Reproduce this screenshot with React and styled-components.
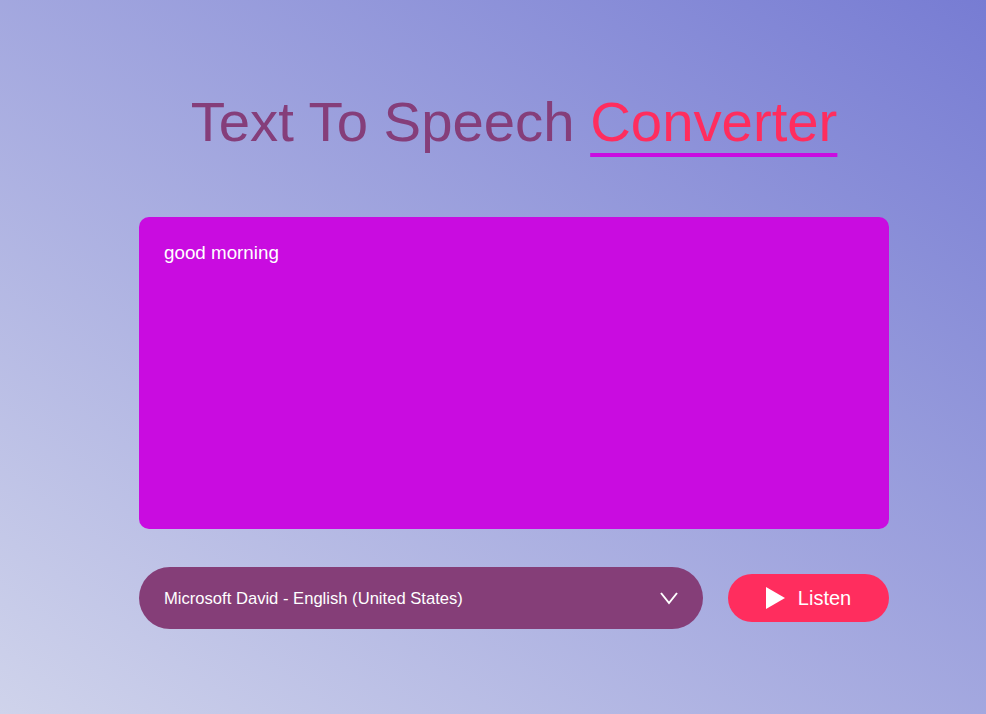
import React, { useState } from 'react';
import styled, { createGlobalStyle } from 'styled-components';

const GlobalStyle = createGlobalStyle`
  * { box-sizing: border-box; }
  html, body { margin: 0; padding: 0; }
  body {
    font-family: "Liberation Sans", Arial, sans-serif;
    min-height: 100vh;
    background: linear-gradient(to right top, #cfd3eb, #777cd3);
  }
`;

const Page = styled.div`
  min-height: 100vh;
  padding: 84px 0 0 42px;
`;

const Container = styled.div`
  width: 750px;
  margin: 0 auto;
  display: flex;
  flex-direction: column;
  align-items: center;
`;

const Title = styled.h1`
  margin: 0;
  font-size: 56.3px;
  font-weight: 400;
  line-height: 76px;
  color: #853e7a;
`;

const Accent = styled.span`
  color: #ff2d5e;
  text-decoration: underline;
  text-decoration-color: #c90de0;
  text-decoration-thickness: 4px;
  text-underline-offset: 12px;
`;

const TextBox = styled.textarea`
  margin-top: 57px;
  width: 100%;
  height: 312px;
  border: none;
  outline: none;
  resize: none;
  border-radius: 10px;
  background: #c90ce0;
  color: #fff;
  padding: 25px 25px;
  font-family: "Liberation Sans", Arial, sans-serif;
  font-size: 18.8px;
  line-height: 22px;
`;

const Row = styled.div`
  margin-top: 38px;
  width: 100%;
  display: flex;
  align-items: center;
  gap: 25px;
`;

const SelectWrap = styled.div`
  position: relative;
  flex: 1;
  height: 62px;
`;

const Select = styled.select`
  appearance: none;
  width: 100%;
  height: 100%;
  border: none;
  outline: none;
  border-radius: 31px;
  background: #853e78;
  color: #fff;
  padding: 0 60px 0 25px;
  font-family: "Liberation Sans", Arial, sans-serif;
  font-size: 16.6px;
`;

const Chevron = styled.svg`
  position: absolute;
  right: 25px;
  top: 24px;
  pointer-events: none;
`;

const ListenButton = styled.button`
  width: 161px;
  height: 48px;
  border: none;
  border-radius: 24px;
  background: #ff2d5e;
  color: #fff;
  display: flex;
  align-items: center;
  justify-content: center;
  gap: 13px;
  font-family: "Liberation Sans", Arial, sans-serif;
  font-size: 20px;
  cursor: pointer;
  padding: 0;
`;

export default function App() {
  const [text, setText] = useState('good morning');

  return (
    <>
      <GlobalStyle />
      <Page>
        <Container>
          <Title>
            Text To Speech <Accent>Converter</Accent>
          </Title>
          <TextBox value={text} onChange={(e) => setText(e.target.value)} />
          <Row>
            <SelectWrap>
              <Select defaultValue="david">
                <option value="david">Microsoft David - English (United States)</option>
                <option value="zira">Microsoft Zira - English (United States)</option>
              </Select>
              <Chevron width="18" height="14" viewBox="0 0 18 14" fill="none">
                <path d="M1 2 L9 12 L17 2" stroke="#fff" strokeWidth="2" />
              </Chevron>
            </SelectWrap>
            <ListenButton>
              <svg width="19" height="22" viewBox="0 0 19 22">
                <path d="M0 0 L19 11 L0 22 Z" fill="#fff" />
              </svg>
              Listen
            </ListenButton>
          </Row>
        </Container>
      </Page>
    </>
  );
}
